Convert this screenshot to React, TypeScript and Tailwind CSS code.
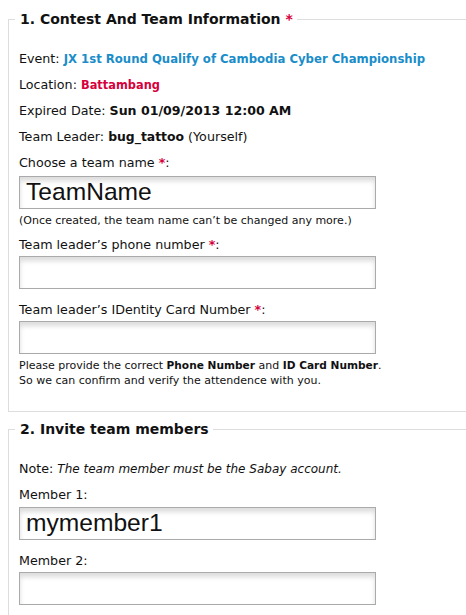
import React from "react";

const Star = () => <span className="text-[#d6003c] font-bold">*</span>;

const Field = ({ value = "" }: { value?: string }) => (
  <div className="w-[357px] h-[33px] border border-[#aaaaaa] bg-white shadow-[inset_0_4px_5px_rgba(0,0,0,0.14)] pl-[6px] flex items-center text-[24.6px] leading-none text-[#111] font-['Liberation_Sans',Arial,sans-serif]">
    {value}
  </div>
);

export default function App() {
  return (
    <div className="w-[466px] h-[615px] overflow-hidden bg-white text-[12.7px] text-[#111] font-['DejaVu_Sans',Verdana,sans-serif]">
      <fieldset className="ml-[8px] mt-[10px] w-[480px] border border-r-0 border-[#dddddd] pl-[10px] pb-[23px]">
        <legend className="-ml-[4px] pl-[5px] pr-[4px] text-[14px] font-bold leading-[18px]">
          1. Contest And Team Information <Star />
        </legend>
        <div className="mt-[18px] leading-[26px]">
          <div>
            Event: <span className="font-bold text-[11.7px] text-[#1a8dc9]">JX 1st Round Qualify of Cambodia Cyber Championship</span>
          </div>
          <div>
            Location: <span className="font-bold text-[11.4px] text-[#d6003c]">Battambang</span>
          </div>
          <div>
            Expired Date: <span className="font-bold text-[12.6px]">Sun 01/09/2013 12:00 AM</span>
          </div>
          <div>
            Team Leader: <span className="font-bold text-[12.4px]">bug_tattoo</span> (Yourself)
          </div>
          <div>
            Choose a team name <Star />:
          </div>
        </div>
        <Field value="TeamName" />
        <div className="text-[11px] leading-[16px] mt-[4px]">(Once created, the team name can’t be changed any more.)</div>
        <div className="leading-[24px] mt-[4px]">
          Team leader’s phone number <Star />:
        </div>
        <div className="-mt-[1px]">
          <Field />
        </div>
        <div className="leading-[24px] mt-[9px]">
          Team leader’s IDentity Card Number <Star />:
        </div>
        <div className="-mt-[1px]">
          <Field />
        </div>
        <div className="text-[11px] leading-[15px] mt-[4px]">
          Please provide the correct <b className="text-[10.6px]">Phone Number</b> and <b className="text-[10.6px]">ID Card Number</b>.
          <br />
          So we can confirm and verify the attendence with you.
        </div>
      </fieldset>
      <fieldset className="ml-[8px] mt-[8px] w-[480px] border border-r-0 border-b-0 border-[#dddddd] pl-[10px] pb-[15px]">
        <legend className="-ml-[4px] pl-[5px] pr-[4px] text-[14px] font-bold leading-[18px]">2. Invite team members</legend>
        <div className="mt-[18px] leading-[26px]">
          <div>
            Note: <i className="text-[12px]">The team member must be the Sabay account.</i>
          </div>
          <div>Member 1:</div>
        </div>
        <div className="-mt-[1px]">
          <Field value="mymember1" />
        </div>
        <div className="leading-[24px] mt-[9px]">Member 2:</div>
        <div className="-mt-[1px]">
          <Field />
        </div>
      </fieldset>
    </div>
  );
}
